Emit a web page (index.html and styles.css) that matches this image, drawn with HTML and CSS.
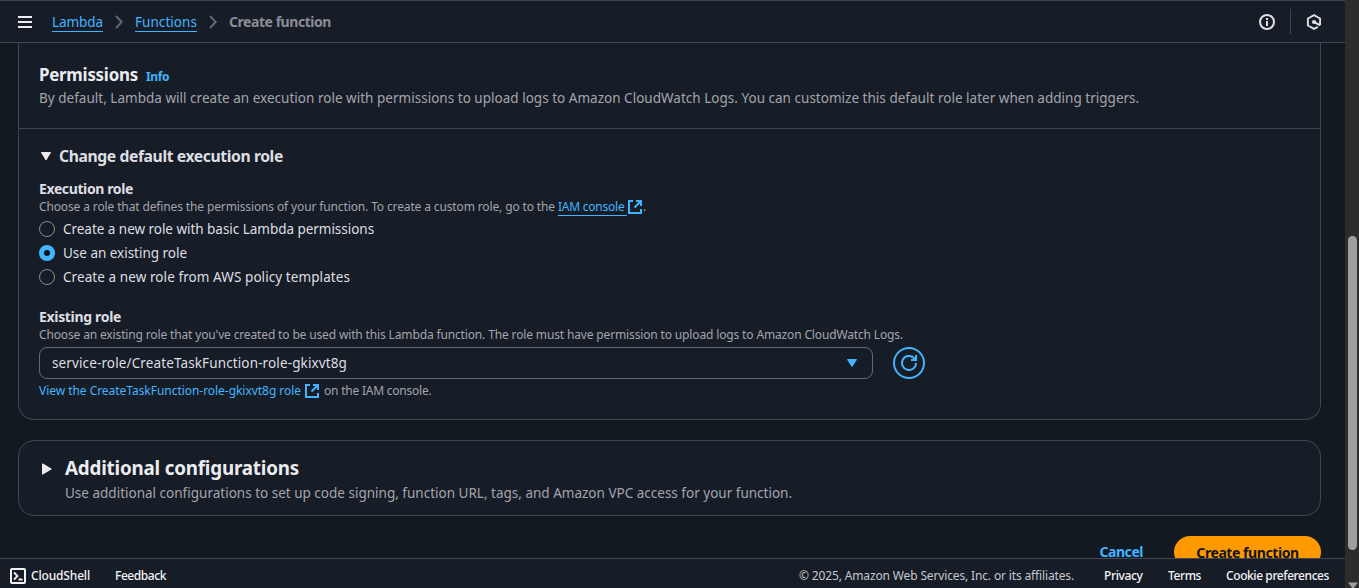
FILE: index.html
```html
<!DOCTYPE html>
<html lang="en">
<head>
<meta charset="utf-8">
<title>Create function - Lambda</title>
<link rel="stylesheet" href="styles.css">
</head>
<body>
<div class="window">
  <div class="app">
    <header class="topbar">
      <svg class="menu" width="14" height="12" viewBox="0 0 14 12"><path d="M0 1h14M0 6h14M0 11h14" stroke="#ebebf0" stroke-width="2"/></svg>
      <nav class="crumbs">
        <a class="crumb lambda">Lambda</a>
        <svg class="chev" width="8" height="14" viewBox="0 0 8 14"><path d="M1 1l5.700 6L1 13" fill="none" stroke="#656871" stroke-width="2"/></svg>
        <a class="crumb functions">Functions</a>
        <svg class="chev" width="8" height="14" viewBox="0 0 8 14"><path d="M1 1l5.700 6L1 13" fill="none" stroke="#656871" stroke-width="2"/></svg>
        <span class="current">Create function</span>
      </nav>
      <div class="tools">
        <svg width="16" height="16" viewBox="0 0 16 16"><circle cx="8" cy="8" r="7" fill="none" stroke="#dedee3" stroke-width="2"/><path d="M8 4v2M8 7v5" stroke="#dedee3" stroke-width="2"/></svg>
        <i class="split"></i>
        <svg width="16" height="16" viewBox="0 0 16 16"><path d="M14.100 11V4.500L8 1.100 1.900 4.500v7L8 14.900l3.800-2.100" fill="none" stroke="#dedee3" stroke-width="1.900" stroke-linejoin="round"/><circle cx="8" cy="8" r="2.100" fill="#dedee3"/><path d="M8 8l6.300 3.300" stroke="#dedee3" stroke-width="2"/></svg>
      </div>
    </header>

    <main class="content">
      <section class="card permissions">
        <div class="card-head">
          <div class="title-row"><h2 class="h-perm">Permissions</h2><a class="info">Info</a></div>
          <p class="body-text desc">By default, Lambda will create an execution role with permissions to upload logs to Amazon CloudWatch Logs. You can customize this default role later when adding triggers.</p>
        </div>
        <div class="card-body">
          <div class="expander">
            <svg width="10" height="9" viewBox="0 0 10 9"><path d="M.5.500h9L5 8z" fill="#ebebf0" stroke="#ebebf0" stroke-linejoin="round"/></svg>
            <h3>Change default execution role</h3>
          </div>
          <div class="label l-exec">Execution role</div>
          <div class="hint"><span class="h-choose">Choose a role that defines the permissions of your function. To create a custom role, go to the</span><a class="iam">IAM console</a><svg class="ext" width="14" height="14" viewBox="0 0 14 14"><path d="M5 1H1v12h12V9M8 1h5v5M13 1L6.500 7.500" fill="none" stroke="#42b4ff" stroke-width="2"/></svg><span>.</span></div>
          <div class="radios">
            <label class="radio"><i></i><span class="r1">Create a new role with basic Lambda permissions</span></label>
            <label class="radio on"><i></i><span class="r2">Use an existing role</span></label>
            <label class="radio"><i></i><span class="r3">Create a new role from AWS policy templates</span></label>
          </div>
          <div class="label l-exist">Existing role</div>
          <div class="hint h-exist">Choose an existing role that you've created to be used with this Lambda function. The role must have permission to upload logs to Amazon CloudWatch Logs.</div>
          <div class="select-row">
            <div class="select"><span>service-role/CreateTaskFunction-role-gkixvt8g</span>
              <svg width="10" height="8" viewBox="0 0 10 8"><path d="M.5.500h9L5 7.500z" fill="#42b4ff" stroke="#42b4ff" stroke-linejoin="round"/></svg>
            </div>
            <button class="refresh"><svg width="16" height="16" viewBox="0 0 16 16"><path d="M15 8a7 7 0 1 1-2.300-5.200L14.500 4.800" fill="none" stroke="#42b4ff" stroke-width="2"/><path d="M15 0v5H10" fill="none" stroke="#42b4ff" stroke-width="2"/></svg></button>
          </div>
          <div class="hint view"><a class="view-link">View the CreateTaskFunction-role-gkixvt8g role</a><svg class="ext" width="14" height="14" viewBox="0 0 14 14"><path d="M5 1H1v12h12V9M8 1h5v5M13 1L6.500 7.500" fill="none" stroke="#42b4ff" stroke-width="2"/></svg><span class="on-iam">on the IAM console.</span></div>
        </div>
      </section>

      <section class="card additional">
        <svg width="10" height="12" viewBox="0 0 10 12"><path d="M.5.800v10.400L9.300 6z" fill="#ebebf0" stroke="#ebebf0" stroke-linejoin="round"/></svg>
        <div>
          <h2 class="h-add">Additional configurations</h2>
          <p class="body-text add-desc">Use additional configurations to set up code signing, function URL, tags, and Amazon VPC access for your function.</p>
        </div>
      </section>

      <div class="actions"><a class="cancel">Cancel</a><button class="primary">Create function</button></div>
    </main>

    <footer class="footer">
      <svg width="16" height="16" viewBox="0 0 16 16"><rect x="1" y="1" width="14" height="14" rx="1" fill="none" stroke="#f3f3f7" stroke-width="2"/><path d="M4 4.500L7.500 8 4 11.500M8.500 11.500H12.500" fill="none" stroke="#f3f3f7" stroke-width="1.800"/></svg>
      <span class="shell">CloudShell</span>
      <span class="feedback">Feedback</span>
      <span class="copy">© 2025, Amazon Web Services, Inc. or its affiliates.</span>
      <span class="privacy">Privacy</span>
      <span class="terms">Terms</span>
      <span class="cookie">Cookie preferences</span>
    </footer>
  </div>
  <div class="scrollbar"><div class="thumb"></div><svg width="10" height="6" viewBox="0 0 10 6"><path d="M0 .5h10L5 7z" fill="#9f9f9f"/></svg></div>
</div>
</body>
</html>
```
FILE: styles.css
```css
* { box-sizing: border-box; }
body { margin: 0; background: #131920; color: #dedee3; font-family: "Noto Sans", "Open Sans", sans-serif; font-size: 13.5px; overflow: hidden; }
h2, h3, p { margin: 0; }
svg { display: block; flex: none; }
span, a, h2, h3, p, .label, button { white-space: nowrap; }
button { font-family: inherit; padding: 0; }

.window { display: flex; height: 588px; }
.app { flex: 1; min-width: 0; display: flex; flex-direction: column; }

.topbar { height: 43px; flex: none; display: flex; align-items: center; padding-left: 18px; background: #161d26; border-top: 1px solid #424650; border-bottom: 1px solid #424650; }
.crumbs { display: flex; align-items: center; margin-left: 20px; }
.crumb { color: #42b4ff; line-height: 18px; border-bottom: 1px solid #42b4ff; margin-top: 1px; }
.lambda { width: 51px; letter-spacing: -.073px; }
.functions { width: 62px; letter-spacing: .056px; }
.chev { margin: 0 12px 0 12px; }
.current { font-size: 14px; font-weight: 700; letter-spacing: -.449px; color: #8c8c94; }
.tools { display: flex; align-items: center; margin-left: auto; margin-right: 23px; }
.split { width: 1px; height: 25px; background: #424650; margin: 0 15px; }

.content { flex: 1; min-height: 0; overflow: hidden; padding: 0 24px 0 18px; }
.card { background: #161d26; border: 1px solid #424650; }
.permissions { height: 377px; border-top: 0; border-radius: 0 0 16px 16px; }
.card-head { height: 86px; padding: 20px 20px 0; border-bottom: 1px solid #424650; }
.title-row { display: flex; height: 25px; align-items: center; }
.h-perm { font-size: 16.9px; line-height: 22px; letter-spacing: -.251px; width: 99px; color: #ebebf0; margin-top: -2px; }
.info { font-size: 12px; font-weight: 700; letter-spacing: -.403px; color: #42b4ff; margin-left: 8px; margin-top: 2px; line-height: 16px; }
.body-text { line-height: 20px; color: #a4a4ad; }
.desc { letter-spacing: .019px; }
.card-body { padding: 17px 20px 0; }
.expander { display: flex; align-items: center; height: 20px; padding-left: 2px; }
.expander h3 { font-size: 15.7px; line-height: 20px; letter-spacing: -.395px; margin-left: 8px; }
.label { font-size: 14px; font-weight: 700; line-height: 20px; color: #dedee3; }
.l-exec { margin-top: 13px; letter-spacing: -.382px; }
.hint { display: flex; align-items: center; height: 16px; font-size: 12px; line-height: 16px; color: #a4a4ad; }
.h-choose { width: 519px; letter-spacing: -.13px; }
.iam { color: #42b4ff; width: 69px; height: 17px; letter-spacing: -.232px; border-bottom: 1px solid #42b4ff; margin-top: 1px; }
.ext { margin: 0 1px; }
.radios { padding-top: 2px; }
.radio { display: flex; align-items: center; height: 24px; line-height: 20px; color: #dedee3; }
.radio i { width: 16px; height: 16px; border: 1px solid #8c8c94; border-radius: 50%; margin-right: 8px; }
.radio.on i { border: 5px solid #42b4ff; background: #0f141a; }
.r1 { letter-spacing: -.032px; }
.r2 { letter-spacing: -.019px; }
.r3 { letter-spacing: .081px; }
.l-exist { margin-top: 18px; letter-spacing: -.327px; }
.h-exist { letter-spacing: -.144px; white-space: nowrap; }
.select-row { display: flex; gap: 20px; margin-top: 4px; }
.select { width: 834px; height: 32px; border: 1px solid #656871; border-radius: 8px; display: flex; align-items: center; justify-content: space-between; padding: 0 15px 0 12px; letter-spacing: .125px; }
.refresh { width: 32px; height: 32px; border: 2px solid #42b4ff; border-radius: 50%; background: none; display: flex; align-items: center; justify-content: center; }
.view { margin-top: 4px; }
.view-link { color: #42b4ff; width: 265px; letter-spacing: -.041px; }
.on-iam { margin-left: 4px; letter-spacing: -.221px; }

.additional { margin-top: 20px; height: 76px; border-radius: 16px; display: flex; padding: 15px 23px 0; }
.additional svg { margin: 7px 13px 0 0; }
.h-add { font-size: 18.8px; line-height: 25px; letter-spacing: -.191px; color: #ebebf0; }
.add-desc { letter-spacing: .004px; margin-top: 2px; }

.actions { display: flex; justify-content: flex-end; margin-top: 20px; line-height: 32px; font-size: 14px; font-weight: 700; letter-spacing: -.455px; }
.cancel { color: #42b4ff; margin-right: 31px; }
.primary { width: 147px; height: 32px; border: 0; border-radius: 16px; background: #ff9900; color: #0f141a; font-size: 14px; font-weight: 700; letter-spacing: -.43px; }

.footer { height: 30px; flex: none; display: flex; align-items: center; padding: 5px 16px 0 10px; background: #161d26; border-top: 1px solid #424650; font-size: 12px; font-weight: 500; line-height: 16px; color: #f3f3f7; }
.shell { margin-left: 5px; width: 84px; letter-spacing: -.165px; }
.feedback { letter-spacing: -.432px; }
.copy { margin-left: auto; width: 305px; font-weight: 400; letter-spacing: -.145px; color: #c6c6cd; }
.privacy { width: 64px; letter-spacing: -.365px; }
.terms { width: 58px; letter-spacing: -.413px; }
.cookie { width: 103px; letter-spacing: -.413px; }

.scrollbar { width: 14px; flex: none; background: #2c2c2c; padding: 236px 0 0 3px; }
.thumb { width: 9px; height: 314px; border-radius: 5px; background: #9f9f9f; margin-bottom: 32px; }
```
